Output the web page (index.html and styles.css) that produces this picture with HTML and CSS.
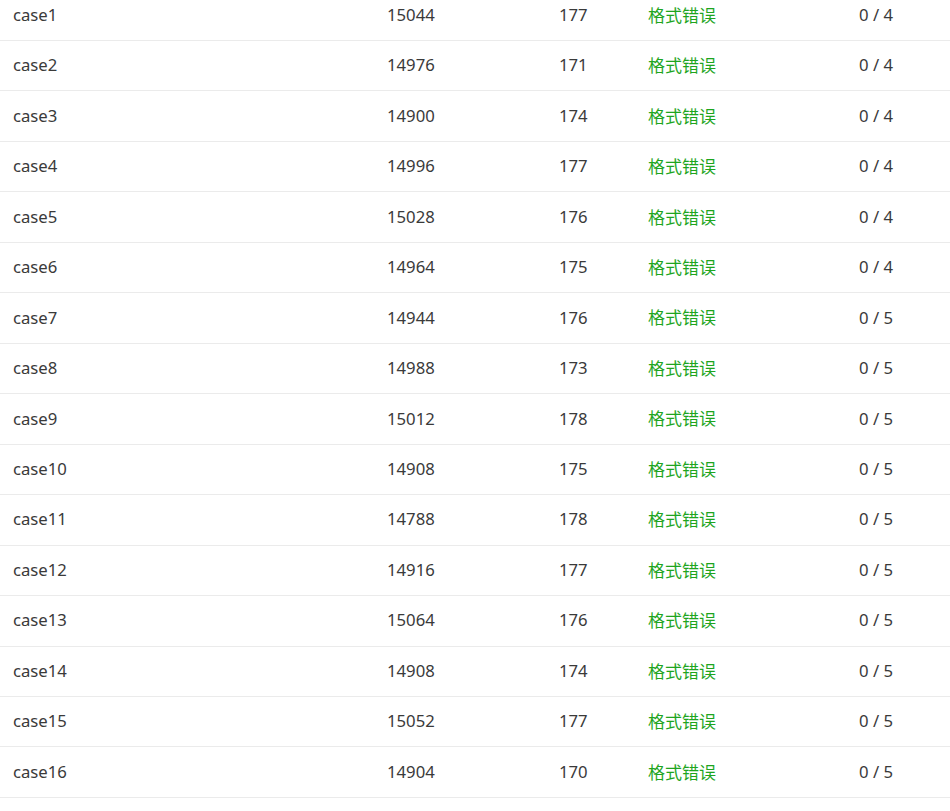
FILE: index.html
```html
<!DOCTYPE html>
<html lang="zh-CN">
<head>
<meta charset="utf-8">
<title>Cases</title>
<link rel="stylesheet" href="styles.css">
</head>
<body>
<div class="table">
  <div class="row"><span class="c1">case1</span><span>15044</span><span>177</span><span class="st">格式错误</span><span>0 / 4</span></div>
  <div class="row"><span class="c1">case2</span><span>14976</span><span>171</span><span class="st">格式错误</span><span>0 / 4</span></div>
  <div class="row"><span class="c1">case3</span><span>14900</span><span>174</span><span class="st">格式错误</span><span>0 / 4</span></div>
  <div class="row"><span class="c1">case4</span><span>14996</span><span>177</span><span class="st">格式错误</span><span>0 / 4</span></div>
  <div class="row"><span class="c1">case5</span><span>15028</span><span>176</span><span class="st">格式错误</span><span>0 / 4</span></div>
  <div class="row"><span class="c1">case6</span><span>14964</span><span>175</span><span class="st">格式错误</span><span>0 / 4</span></div>
  <div class="row"><span class="c1">case7</span><span>14944</span><span>176</span><span class="st">格式错误</span><span>0 / 5</span></div>
  <div class="row"><span class="c1">case8</span><span>14988</span><span>173</span><span class="st">格式错误</span><span>0 / 5</span></div>
  <div class="row"><span class="c1">case9</span><span>15012</span><span>178</span><span class="st">格式错误</span><span>0 / 5</span></div>
  <div class="row"><span class="c1">case10</span><span>14908</span><span>175</span><span class="st">格式错误</span><span>0 / 5</span></div>
  <div class="row"><span class="c1">case11</span><span>14788</span><span>178</span><span class="st">格式错误</span><span>0 / 5</span></div>
  <div class="row"><span class="c1">case12</span><span>14916</span><span>177</span><span class="st">格式错误</span><span>0 / 5</span></div>
  <div class="row"><span class="c1">case13</span><span>15064</span><span>176</span><span class="st">格式错误</span><span>0 / 5</span></div>
  <div class="row"><span class="c1">case14</span><span>14908</span><span>174</span><span class="st">格式错误</span><span>0 / 5</span></div>
  <div class="row"><span class="c1">case15</span><span>15052</span><span>177</span><span class="st">格式错误</span><span>0 / 5</span></div>
  <div class="row"><span class="c1">case16</span><span>14904</span><span>170</span><span class="st">格式错误</span><span>0 / 5</span></div>
</div>
</body>
</html>
```
FILE: styles.css
```css
html, body {
  margin: 0;
  padding: 0;
  background: #ffffff;
  overflow: hidden;
}
body {
  font-family: "Noto Sans", "Noto Sans CJK SC", sans-serif;
  font-size: 16.7px;
  color: #3a3a3a;
}
.table {
  margin-top: -9.6px;
}
.row {
  display: grid;
  grid-template-columns: 374px 172px 89px 211px 1fr;
  align-items: center;
  height: 50.47px;
  box-sizing: border-box;
  padding-left: 13px;
  border-bottom: 1px solid #ebebeb;
  line-height: 1;
}
.st {
  color: #1ea51e;
  font-size: 17px;
}
```
